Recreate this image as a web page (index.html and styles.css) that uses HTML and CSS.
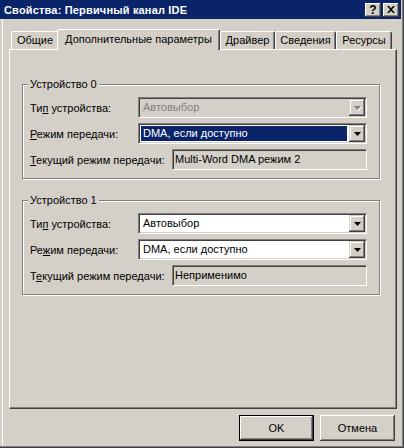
FILE: index.html
```html
<!DOCTYPE html>
<html lang="ru">
<head>
    <meta charset="UTF-8">
    <title>Свойства: Первичный канал IDE</title>
    <link rel="stylesheet" href="styles.css">
</head>
<body>
    <div class="window">
        <div class="titlebar">
            <span class="title">Свойства: Первичный канал IDE</span>
            <div class="caption-buttons">
                <div class="cap-btn help">?</div>
                <div class="cap-btn">
                    <svg width="8" height="7" viewBox="0 0 8 7"><path d="M0 0h2l2 2.2L6 0h2L5 3.5 8 7H6L4 4.8 2 7H0l3-3.5z" fill="#000"/></svg>
                </div>
            </div>
        </div>
        <div class="client">
            <div class="tabs">
                <div class="tab tab-general">Общие</div>
                <div class="tab tab-advanced active">Дополнительные параметры</div>
                <div class="tab tab-driver">Драйвер</div>
                <div class="tab tab-details">Сведения</div>
                <div class="tab tab-resources">Ресурсы</div>
            </div>
            <div class="panel">
                <div class="group">
                    <div class="legend">Устройство 0</div>
                    <div class="row">
                        <span class="label">Ти<u>п</u> устройства:</span>
                        <div class="combo disabled">
                            <span class="value">Автовыбор</span>
                            <span class="drop"><svg width="7" height="5" viewBox="0 0 7 5"><path d="M1 1h7L4.5 5z" fill="#fff"/><path d="M0 0h7L3.5 4z" fill="#808080"/></svg></span>
                        </div>
                    </div>
                    <div class="row">
                        <span class="label"><u>Р</u>ежим передачи:</span>
                        <div class="combo">
                            <span class="value selected">DMA, если доступно</span>
                            <span class="drop"><svg width="7" height="4" viewBox="0 0 7 4"><path d="M0 0h7L3.5 4z" fill="#000"/></svg></span>
                        </div>
                    </div>
                    <div class="row">
                        <span class="label wide"><u>Т</u>екущий режим передачи:</span>
                        <div class="field">Multi-Word DMA режим 2</div>
                    </div>
                </div>
                <div class="group second">
                    <div class="legend">Устройство 1</div>
                    <div class="row">
                        <span class="label">Ти<u>п</u> устройства:</span>
                        <div class="combo">
                            <span class="value">Автовыбор</span>
                            <span class="drop"><svg width="7" height="4" viewBox="0 0 7 4"><path d="M0 0h7L3.5 4z" fill="#000"/></svg></span>
                        </div>
                    </div>
                    <div class="row">
                        <span class="label">Ре<u>ж</u>им передачи:</span>
                        <div class="combo">
                            <span class="value">DMA, если доступно</span>
                            <span class="drop"><svg width="7" height="4" viewBox="0 0 7 4"><path d="M0 0h7L3.5 4z" fill="#000"/></svg></span>
                        </div>
                    </div>
                    <div class="row">
                        <span class="label wide">Т<u>е</u>кущий режим передачи:</span>
                        <div class="field">Неприменимо</div>
                    </div>
                </div>
            </div>
            <div class="buttons">
                <button type="button" class="btn default">OK</button>
                <button type="button" class="btn">Отмена</button>
            </div>
        </div>
    </div>
</body>
</html>
```

FILE: styles.css
```css
* {
    margin: 0;
    padding: 0;
    box-sizing: border-box;
}
body {
    width: 404px;
    height: 448px;
    overflow: hidden;
    background-color: #D4D0C8;
    font-family: 'Liberation Sans', Arial, sans-serif;
    font-size: 11px;
    color: #000000;
}
.window {
    width: 404px;
    height: 448px;
    padding-right: 3px;
    background-color: #D4D0C8;
    box-shadow: inset -1px -1px #404040, inset -2px -2px #808080;
    display: flex;
    flex-direction: column;
}
.titlebar {
    height: 19px;
    flex-shrink: 0;
    background-color: #0A246A;
    color: #FFFFFF;
    font-weight: bold;
    letter-spacing: 0.17px;
    display: flex;
    align-items: center;
    justify-content: space-between;
    padding: 0 2px 0 4px;
}
.caption-buttons {
    display: flex;
    gap: 2px;
    letter-spacing: 0;
}
.cap-btn {
    width: 16px;
    height: 14px;
    background-color: #D4D0C8;
    color: #000000;
    box-shadow: inset -1px -1px #404040, inset 1px 1px #FFFFFF, inset -2px -2px #808080;
    display: flex;
    align-items: center;
    justify-content: center;
    font-size: 12px;
    line-height: 14px;
}
.cap-btn svg {
    display: block;
}
.client {
    flex: 1;
    margin-left: 2px;
    border-left: 1px solid #FFFFFF;
    margin-bottom: 2px;
    padding-left: 6px;
}

/* tabs */
.tabs {
    display: flex;
    align-items: flex-end;
    height: 20px;
    margin-top: 10px;
    padding-left: 2px;
}
.tab {
    height: 18px;
    background-color: #D4D0C8;
    border-top: 1px solid #FFFFFF;
    border-left: 1px solid #FFFFFF;
    border-right: 1px solid #404040;
    border-radius: 2px 2px 0 0;
    box-shadow: inset -1px 0 #808080;
    text-align: center;
    line-height: 17px;
    white-space: nowrap;
}
.tab.active {
    height: 21px;
    margin-left: -2px;
    margin-bottom: -1px;
    line-height: 18px;
    position: relative;
    z-index: 1;
}
.tab-general { width: 48px; }
.tab-advanced { width: 163px; }
.tab-driver { width: 55px; }
.tab-details { width: 61px; }
.tab-resources { width: 56px; }

.panel {
    width: 388px;
    height: 360px;
    border-top: 1px solid #FFFFFF;
    border-left: 1px solid #FFFFFF;
    border-right: 1px solid #404040;
    border-bottom: 1px solid #404040;
    box-shadow: inset -1px -1px #808080;
    padding: 34px 15px 0 12px;
}

/* group boxes */
.group {
    position: relative;
    width: 358px;
    border: 1px solid #808080;
    box-shadow: 1px 1px #FFFFFF, inset 1px 1px #FFFFFF;
    padding: 12px 12px 8px 7px;
    display: flex;
    flex-direction: column;
    gap: 5px;
}
.group.second {
    margin-top: 21px;
}
.legend {
    position: absolute;
    top: -7px;
    left: 5px;
    padding: 0 2px;
    background-color: #D4D0C8;
    line-height: 13px;
}
.row {
    display: flex;
    align-items: center;
    height: 21px;
}
.label {
    width: 108px;
    flex-shrink: 0;
    white-space: nowrap;
}
.label.wide {
    width: 142px;
}

/* combo boxes and fields */
.combo, .field {
    flex: 1;
    height: 21px;
    border-top: 1px solid #808080;
    border-left: 1px solid #808080;
    border-right: 1px solid #FFFFFF;
    border-bottom: 1px solid #FFFFFF;
    box-shadow: inset 1px 1px #404040, inset -1px -1px #D4D0C8;
}
.combo {
    background-color: #FFFFFF;
    display: flex;
    padding: 1px;
}
.combo .value {
    flex: 1;
    margin: 1px 2px 1px 1px;
    padding-left: 2px;
    line-height: 15px;
    white-space: nowrap;
}
.combo .value.selected {
    background-color: #0A246A;
    color: #FFFFFF;
}
.combo .drop {
    width: 16px;
    height: 17px;
    background-color: #D4D0C8;
    box-shadow: inset -1px -1px #404040, inset 1px 1px #D4D0C8, inset -2px -2px #808080, inset 2px 2px #FFFFFF;
    display: flex;
    align-items: center;
    justify-content: center;
}
.combo .drop svg {
    display: block;
    margin-top: 1px;
}
.combo.disabled {
    background-color: #D4D0C8;
}
.combo.disabled .value {
    color: #808080;
}
.field {
    background-color: #D4D0C8;
    padding-left: 2px;
    line-height: 19px;
    white-space: nowrap;
}

/* bottom buttons */
.buttons {
    display: flex;
    justify-content: flex-end;
    gap: 6px;
    margin-top: 6px;
    padding-right: 6px;
}
.btn {
    width: 75px;
    height: 26px;
    background-color: #D4D0C8;
    border: none;
    font-family: 'Liberation Sans', Arial, sans-serif;
    font-size: 11px;
    color: #000000;
    box-shadow: inset -1px -1px #404040, inset 1px 1px #FFFFFF, inset -2px -2px #808080, inset 2px 2px #D4D0C8;
}
.btn.default {
    border: 1px solid #000000;
}
```
